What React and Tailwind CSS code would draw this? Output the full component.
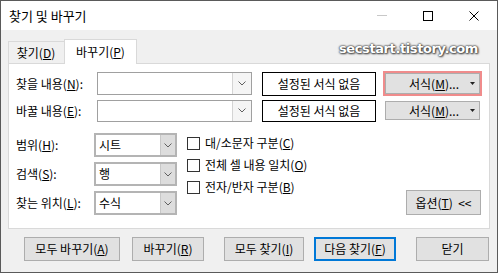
import React from "react";

const Chevron = ({ color = "#606060" }) => (
  <svg width="8" height="5" viewBox="0 0 8 5">
    <polyline points="0.5,0.5 4,4 7.5,0.5" fill="none" stroke={color} strokeWidth="1" />
  </svg>
);

const Combo = ({ h }) => (
  <div className={`w-[155px] ${h} bg-white border border-[#a0a0a0] flex`}>
    <div className="flex-1" />
    <div className="w-[19px] border-l border-[#d4d4d4] bg-[#f5f5f5] flex items-center justify-center">
      <Chevron />
    </div>
  </div>
);

const Select = ({ value }) => (
  <div className="w-[83px] h-[24px] bg-white border-2 border-[#b4b4b4] flex items-center">
    <div className="flex-1 pl-[3px] leading-none">{value}</div>
    <div className="w-[15px] h-full bg-[#dddddd] border-l border-[#c8c8c8] flex items-center justify-center">
      <Chevron />
    </div>
  </div>
);

const Check = ({ children }) => (
  <div className="h-[22px] flex items-center">
    <div className="w-[13px] h-[13px] border border-[#333] bg-white" />
    <span className="ml-[5px]">{children}</span>
  </div>
);

const Btn = ({ w, children, blue }) => (
  <div
    className={`${w} h-[24px] bg-[#e1e1e1] flex items-center justify-center ${
      blue ? "border-2 border-[#0078d7]" : "border border-[#adadad]"
    }`}
  >
    {children}
  </div>
);

const FormatBtn = ({ h }) => (
  <div className={`w-[95px] ${h} bg-[#e1e1e1] border border-[#adadad] flex items-center justify-end pr-[4px]`}>
    <span>
      서식(<u>M</u>)...
    </span>
    <svg className="ml-[11px]" width="5" height="3" viewBox="0 0 5 3">
      <polygon points="0,0 5,0 2.5,3" fill="#222" />
    </svg>
  </div>
);

export default function App() {
  return (
    <div className="relative w-[498px] h-[273px] bg-[#f0f0f0] border border-[#5a5a5a] flex flex-col text-[12px] text-black font-['Noto_Sans_CJK_KR','Noto_Sans',sans-serif] leading-none">
      {/* title bar */}
      <div className="h-[29px] bg-white flex items-center shrink-0">
        <div className="pl-[8px] text-[13px] flex-1">찾기 및 바꾸기</div>
        <div className="w-[46px] h-full flex items-center justify-center">
          <div className="w-[10px] h-px bg-[#c8c8c8]" />
        </div>
        <div className="w-[46px] h-full flex items-center justify-center">
          <div className="w-[10px] h-[10px] border border-black" />
        </div>
        <div className="w-[46px] h-full flex items-center justify-center">
          <svg width="10" height="10" viewBox="0 0 10 10">
            <path d="M0.5 0.5 L9.5 9.5 M9.5 0.5 L0.5 9.5" stroke="#000" strokeWidth="1" />
          </svg>
        </div>
      </div>

      <div className="px-[7px] flex flex-col">
        {/* tabs */}
        <div className="mt-[8px] h-[25px] flex items-end">
          <div className="w-[56px] h-[22px] bg-[#f0f0f0] border border-b-0 border-r-0 border-[#d9d9d9] flex items-center justify-center pr-[1px]">
            찾기(<u>D</u>)
          </div>
          <div className="relative z-10 -mb-px w-[73px] h-[25px] bg-white border border-b-0 border-[#d9d9d9] flex items-center justify-center">
            바꾸기(<u>P</u>)
          </div>
        </div>

        {/* panel */}
        <div className="w-[482px] h-[166px] bg-white border border-[#d9d9d9] flex flex-col">
          <div className="mt-[7px] h-[25px] flex items-center pl-[7px]">
            <div className="w-[81px]">
              찾을 내용(<u>N</u>):
            </div>
            <Combo h="h-[23px]" />
            <div className="ml-[10px] w-[114px] h-[24px] border border-black bg-white flex items-center justify-center">
              설정된 서식 없음
            </div>
            <div className="ml-[7px] border-2 border-[#f08c8c]">
              <FormatBtn h="h-[21px]" />
            </div>
          </div>
          <div className="mt-[3px] h-[23px] flex items-center pl-[7px]">
            <div className="w-[81px]">
              바꿀 내용(<u>E</u>):
            </div>
            <Combo h="h-[22px]" />
            <div className="ml-[10px] w-[114px] h-[22px] border border-black bg-white flex items-center justify-center">
              설정된 서식 없음
            </div>
            <div className="ml-[7px] border-2 border-transparent">
              <FormatBtn h="h-[19px]" />
            </div>
          </div>

          <div className="mt-[11px] flex pl-[7px] pr-[8px]">
            <div className="flex flex-col gap-[5px]">
              <div className="flex items-center">
                <div className="w-[78px]">
                  범위(<u>H</u>):
                </div>
                <Select value="시트" />
              </div>
              <div className="flex items-center">
                <div className="w-[78px]">
                  검색(<u>S</u>):
                </div>
                <Select value="행" />
              </div>
              <div className="flex items-center">
                <div className="w-[78px]">
                  찾는 위치(<u>L</u>):
                </div>
                <Select value="수식" />
              </div>
            </div>
            <div className="ml-[10px] -mt-[1px] flex flex-col">
              <Check>
                대/소문자 구분(<u>C</u>)
              </Check>
              <Check>
                전체 셀 내용 일치(<u>O</u>)
              </Check>
              <Check>
                전자/반자 구분(<u>B</u>)
              </Check>
            </div>
            <div className="flex-1 flex items-end justify-end">
              <div className="w-[75px] h-[25px] bg-[#e1e1e1] border border-[#adadad] flex items-center justify-center">
                옵션(<u>T</u>)&nbsp;&nbsp;&lt;&lt;
              </div>
            </div>
          </div>
        </div>

        {/* bottom buttons */}
        <div className="mt-[8px] ml-[16px] flex">
          <Btn w="w-[96px]">
            모두 바꾸기(<u>A</u>)
          </Btn>
          <div className="ml-[12px]">
            <Btn w="w-[72px]">
              바꾸기(<u>R</u>)
            </Btn>
          </div>
          <div className="ml-[20px]">
            <Btn w="w-[80px]">
              모두 찾기(<u>I</u>)
            </Btn>
          </div>
          <div className="ml-[10px]">
            <Btn w="w-[82px]" blue>
              다음 찾기(<u>F</u>)
            </Btn>
          </div>
          <div className="ml-[20px]">
            <Btn w="w-[73px]">닫기</Btn>
          </div>
        </div>
      </div>

      {/* watermark */}
      <div className="absolute left-[338px] top-[41px] text-[13px] font-bold text-white font-['DejaVu_Sans',sans-serif] tracking-[-0.4px] [text-shadow:0_0_2px_#333,0_0_2px_#333,1px_1px_2px_#555]">
        secstart.tistory.com
      </div>
    </div>
  );
}
